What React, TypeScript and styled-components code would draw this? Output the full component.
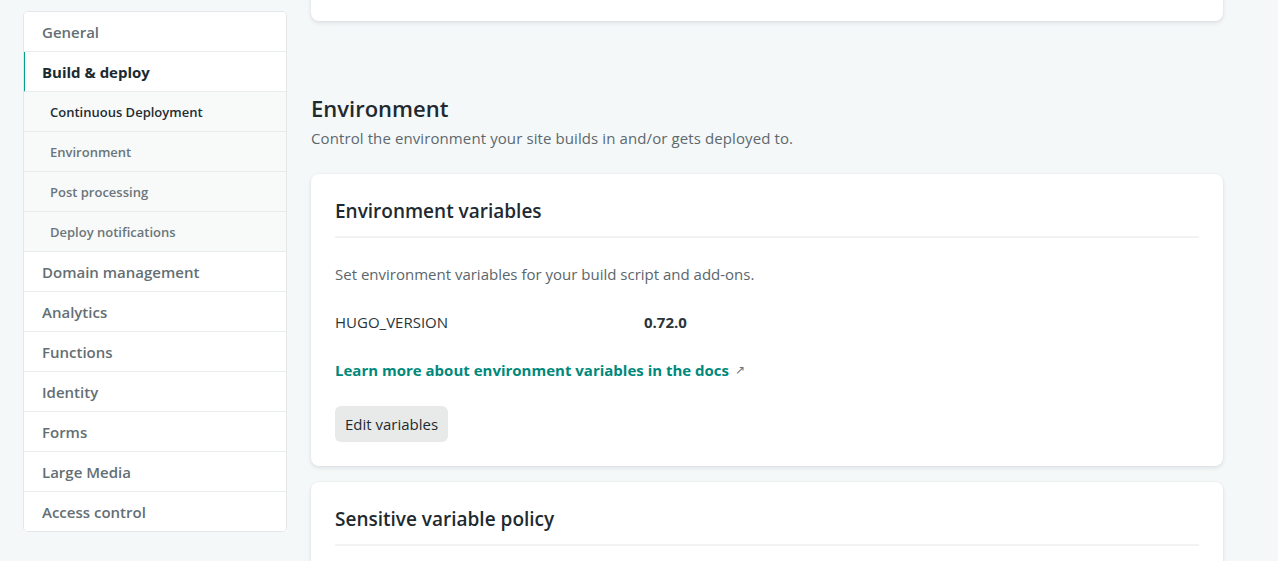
import React from "react";
import styled, { createGlobalStyle } from "styled-components";

const Global = createGlobalStyle`
  html, body { margin: 0; padding: 0; }
  body {
    background: #f5f8f9;
    font-family: "Open Sans", "Noto Sans", sans-serif;
    color: #1e2a30;
    -webkit-font-smoothing: antialiased;
  }
`;

const Page = styled.div`
  display: grid;
  grid-template-columns: 264px 912px;
  column-gap: 24px;
  padding: 0 0 0 23px;
  height: 561px;
  overflow: hidden;
`;

const Nav = styled.nav`
  margin-top: 11px;
  align-self: start;
  background: #fff;
  border: 1px solid #e3e7e8;
  border-radius: 5px;
  overflow: hidden;
  display: flex;
  flex-direction: column;
`;

const NavItem = styled.a<{ $sub?: boolean; $active?: boolean }>`
  display: flex;
  align-items: center;
  height: 39px;
  padding-left: ${(p) => (p.$sub ? "25px" : "17px")};
  border-left: 2px solid ${(p) => (p.$active ? "#00a08a" : "transparent")};
  margin-left: -1px;
  border-bottom: 1px solid #e9ecec;
  background: ${(p) => (p.$sub ? "#f8f9f9" : "#fff")};
  font-size: ${(p) => (p.$sub ? "13px" : "15px")};
  font-weight: ${(p) => (p.$active ? 700 : 600)};
  color: ${(p) => (p.$active ? "#1a2a30" : p.$sub ? "#6a767b" : "#646f74")};
  text-decoration: none;
  &:last-child { border-bottom: none; }
`;

const SubDark = styled.span`
  color: #1f2d33;
`;

const Main = styled.main`
  display: flex;
  flex-direction: column;
`;

const Card = styled.section`
  background: #fff;
  border-radius: 8px;
  box-shadow: 0 2px 4px rgba(14, 30, 37, 0.1), 0 0 0 1px rgba(14, 30, 37, 0.02);
  padding: 24px 24px 24px;
`;

const TopCard = styled(Card)`
  margin-top: -16px;
  height: 37px;
  padding: 0;
`;

const Section = styled.div`
  margin-top: 71px;
`;

const H2 = styled.h2`
  margin: 0;
  font-size: 22px;
  font-weight: 600;
  line-height: 32px;
  color: #1e2a30;
`;

const Lead = styled.p`
  margin: 3px 0 0;
  font-size: 15px;
  line-height: 22px;
  letter-spacing: 0.1px;
  color: #5c686e;
`;

const Cards = styled.div`
  margin-top: 25px;
  display: flex;
  flex-direction: column;
  gap: 16px;
`;

const CardTitle = styled.h3`
  margin: 0;
  padding: 0 0 12px;
  border-bottom: 2px solid #f1f3f3;
  font-size: 19px;
  font-weight: 600;
  line-height: 26px;
  color: #1e2a30;
`;

const Text = styled.p`
  margin: 25px 0 0;
  font-size: 15px;
  line-height: 22px;
  color: #5a666c;
`;

const VarRow = styled.div`
  margin-top: 26px;
  display: grid;
  grid-template-columns: 309px auto;
  font-size: 15px;
  line-height: 22px;
`;

const VarKey = styled.span`
  color: #2a353a;
`;

const VarValue = styled.span`
  color: #2a353a;
  font-weight: 700;
`;

const DocLink = styled.a`
  display: inline-flex;
  align-items: center;
  gap: 6px;
  margin-top: 26px;
  font-size: 15px;
  line-height: 22px;
  font-weight: 700;
  color: #00897b;
  text-decoration: none;
`;

const Arrow = styled.span`
  font-weight: 400;
  font-size: 12px;
  color: #6a767b;
`;

const Button = styled.button`
  display: block;
  margin-top: 25px;
  height: 36px;
  padding: 0 10px;
  border: none;
  border-radius: 6px;
  background: #e8eaea;
  font-family: inherit;
  font-size: 15px;
  font-weight: 500;
  color: #1e2a30;
`;

const navItems: { label: string; sub?: boolean; active?: boolean; dark?: boolean }[] = [
  { label: "General" },
  { label: "Build & deploy", active: true },
  { label: "Continuous Deployment", sub: true, dark: true },
  { label: "Environment", sub: true },
  { label: "Post processing", sub: true },
  { label: "Deploy notifications", sub: true },
  { label: "Domain management" },
  { label: "Analytics" },
  { label: "Functions" },
  { label: "Identity" },
  { label: "Forms" },
  { label: "Large Media" },
  { label: "Access control" },
];

export default function App() {
  return (
    <>
      <Global />
      <Page>
        <Nav>
          {navItems.map((n) => (
            <NavItem key={n.label} $sub={n.sub} $active={n.active} href="#">
              {n.dark ? <SubDark>{n.label}</SubDark> : n.label}
            </NavItem>
          ))}
        </Nav>
        <Main>
          <TopCard />
          <Section>
            <H2>Environment</H2>
            <Lead>Control the environment your site builds in and/or gets deployed to.</Lead>
            <Cards>
              <Card>
                <CardTitle>Environment variables</CardTitle>
                <Text>Set environment variables for your build script and add-ons.</Text>
                <VarRow>
                  <VarKey>HUGO_VERSION</VarKey>
                  <VarValue>0.72.0</VarValue>
                </VarRow>
                <DocLink href="#">
                  Learn more about environment variables in the docs <Arrow>↗</Arrow>
                </DocLink>
                <Button>Edit variables</Button>
              </Card>
              <Card>
                <CardTitle>Sensitive variable policy</CardTitle>
              </Card>
            </Cards>
          </Section>
        </Main>
      </Page>
    </>
  );
}
